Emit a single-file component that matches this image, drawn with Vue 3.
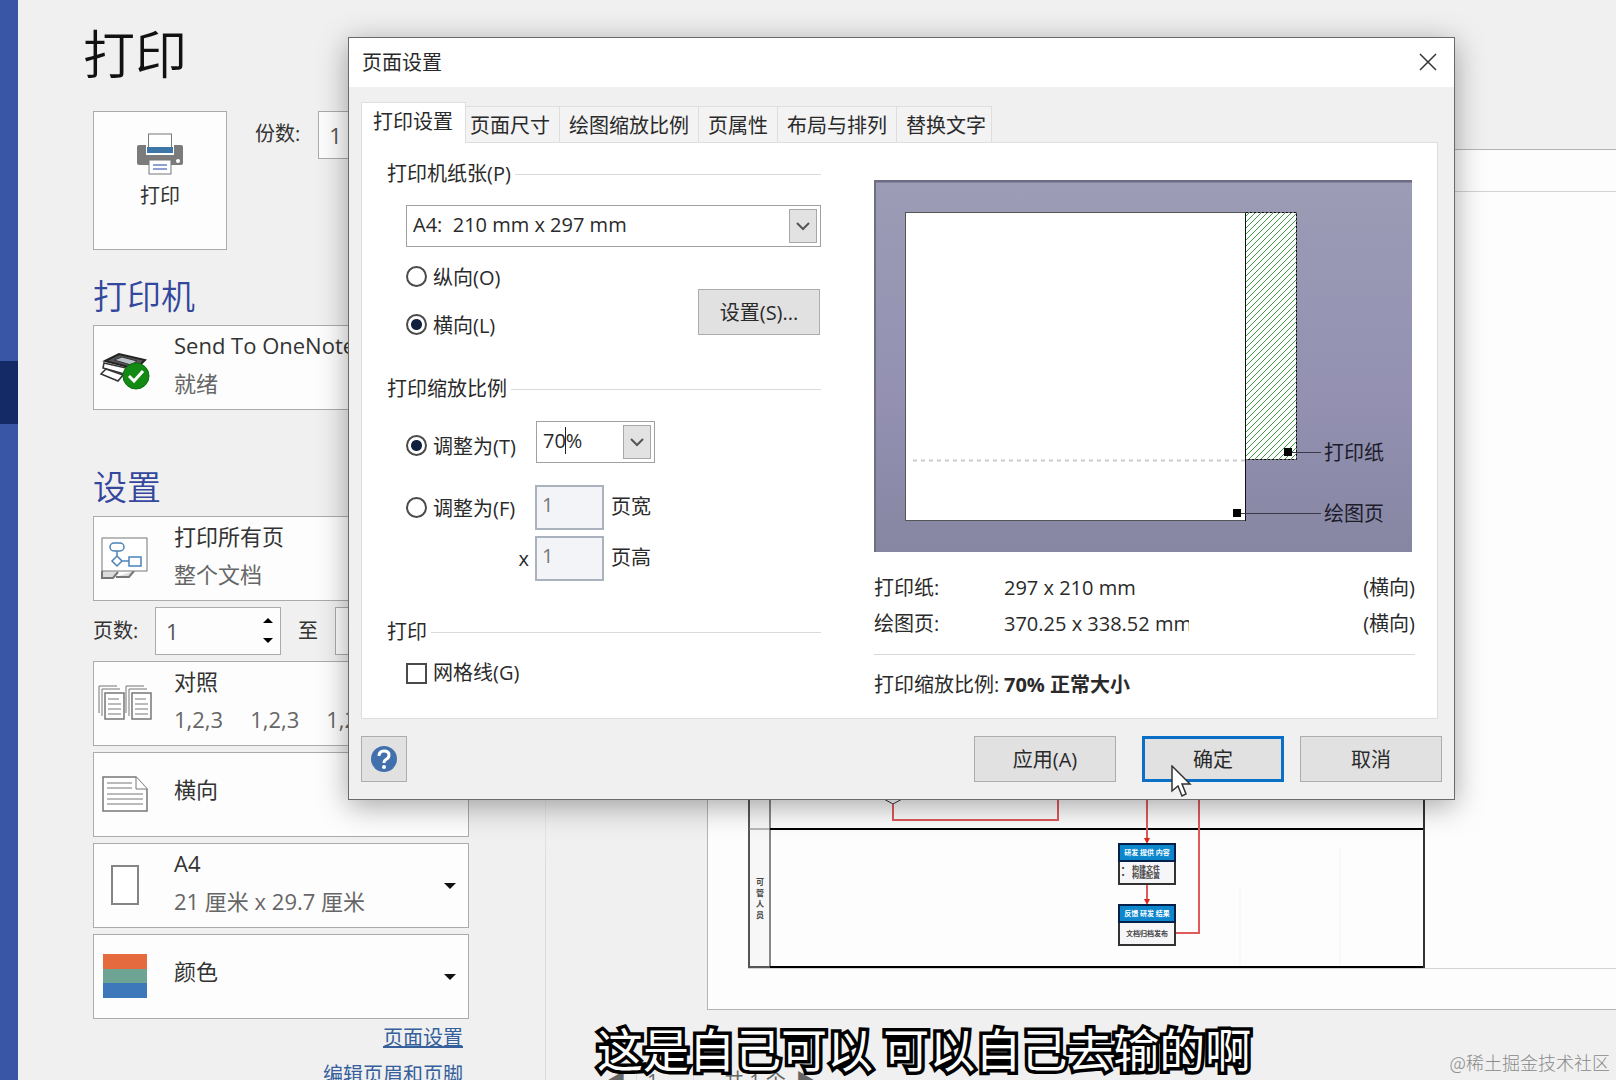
<script setup>
import { ref } from 'vue'

const tabs = ['打印设置', '页面尺寸', '绘图缩放比例', '页属性', '布局与排列', '替换文字']
const activeTab = ref(0)
const orientation = ref('landscape')
const scaleMode = ref('adjust')
const zoom = ref('70%')
const grid = ref(false)
const copies = ref('1')
const fromPage = ref('1')
const toPage = ref('1')
const currentPage = ref('1')
const laneName = ['可', '管', '人', '员']
</script>

<template>
  <div class="app">
    <nav class="rail"><div class="rail-active"></div></nav>

    <main class="panel">
      <h1>打印</h1>
      <div class="print-row">
        <button class="print-btn">
          <svg width="46" height="42" viewBox="0 0 46 42">
            <path d="M2 12h42q2 0 2 2v16q0 2-2 2H2q-2 0-2-2V14q0-2 2-2z" fill="#7b7b7b" />
            <rect x="9" y="10" width="28" height="12" fill="#fdfdfd" />
            <rect x="11.500" y="1" width="23" height="18" fill="#fff" stroke="#777" />
            <rect x="10" y="14" width="26" height="6" fill="#3f76a8" />
            <rect x="12" y="27" width="22" height="14" fill="#fff" stroke="#777" />
            <path d="M16 32h14M16 36h14" stroke="#8f9fd6" stroke-width="2" />
            <circle cx="41" cy="28" r="2" fill="#fff" />
          </svg>
          <span>打印</span>
        </button>
        <label class="copies"><span>份数:</span><input v-model="copies" class="num" type="text" /></label>
      </div>

      <h2>打印机</h2>
      <button class="card">
        <span class="icon">
          <svg width="52" height="48" viewBox="0 -8 52 48">
            <path d="M6 10 20 3l26 6-9 9z" fill="#555" stroke="#222" stroke-width="2" />
            <path d="M15 9 23 6l15 4-6 4z" fill="#b9c1c8" stroke="#333" />
            <path d="M5 12 36 19v7L4 17z" fill="#fff" stroke="#333" stroke-width="1.500" />
            <path d="M7 18 2 23l17 7 5-6z" fill="#fff" stroke="#333" stroke-width="1.500" />
            <circle cx="37" cy="25" r="13" fill="#138a13" stroke="#0a6d0a" />
            <path d="m30 25 5 5 9-10" fill="none" stroke="#fff" stroke-width="3" />
          </svg>
        </span>
        <span class="lines"><span>Send To OneNote</span><span class="sub">就绪</span></span>
        <i class="caret"></i>
      </button>

      <h2 class="second">设置</h2>
      <div class="stack">
        <button class="card">
          <span class="icon">
            <svg width="48" height="42" viewBox="0 0 48 42" fill="none">
              <path d="M1 34v7h11l5-6M15 40h13l5-6" stroke="#777" stroke-width="2" fill="#ddd" />
              <rect x="1" y="1" width="45" height="33" fill="#fff" stroke="#777" stroke-width="1" />
              <g stroke="#4a83ba" stroke-width="1.500">
                <rect x="9" y="6" width="14" height="8" rx="4" />
                <path d="M16 14v5M16 19l5 5-5 5-5-5zM21 24h7" />
                <rect x="28" y="20" width="12" height="9" />
              </g>
            </svg>
          </span>
          <span class="lines"><span>打印所有页</span><span class="sub">整个文档</span></span>
          <i class="caret"></i>
        </button>

        <div class="pages">
          <label for="from">页数:</label>
          <div class="spin">
            <input id="from" v-model="fromPage" class="num" type="text" />
            <span class="arrows"><i class="up"></i><i class="down"></i></span>
          </div>
          <label for="to">至</label>
          <div class="spin"><input id="to" v-model="toPage" class="num" type="text" /></div>
        </div>

        <button class="card">
          <span class="icon">
            <svg width="54" height="36" viewBox="0 0 54 36" fill="#fff" stroke="#777">
              <g v-for="x in [0, 27]" :key="x" :transform="`translate(${x} 0)`">
                <path d="M1 28V1h18" fill="none" />
                <path d="M4 31V4h18" fill="none" />
                <path d="M7 8h19v26H7z" stroke-width="1.500" />
                <path d="M10 14h11M10 19h13M10 24h13M10 29h13" />
              </g>
            </svg>
          </span>
          <span class="lines">
            <span>对照</span>
            <span class="sub sets"><span>1,2,3</span><span>1,2,3</span><span>1,2,3</span></span>
          </span>
          <i class="caret"></i>
        </button>

        <button class="card">
          <span class="icon">
            <svg width="46" height="36" viewBox="0 0 46 36" fill="#fff" stroke="#777">
              <path d="M1 1h33l11 12v22H1z" stroke-width="1.500" />
              <path d="M34 1v12h11" />
              <path d="M5 7h25M5 12h25M5 18h36M5 23h36M5 28h36" />
            </svg>
          </span>
          <span class="lines single"><span>横向</span></span>
          <i class="caret"></i>
        </button>

        <button class="card">
          <span class="icon"><i class="sheet"></i></span>
          <span class="lines"><span>A4</span><span class="sub">21 厘米 x 29.7 厘米</span></span>
          <i class="caret"></i>
        </button>

        <button class="card">
          <span class="icon"><i class="swatch"></i></span>
          <span class="lines single"><span>颜色</span></span>
          <i class="caret"></i>
        </button>
      </div>

      <div class="links">
        <a href="#page-setup">页面设置</a>
        <a href="#header-footer">编辑页眉和页脚</a>
      </div>
    </main>

    <section class="preview">
      <div class="page">
        <div class="drawing">
          <svg width="680" height="170" viewBox="0 0 680 170">
            <rect x="1" y="0" width="21" height="168" fill="#f7f7f7" />
            <path d="M1 0V169H22" fill="none" stroke="#555" stroke-width="2" />
            <path d="M22 0V168" stroke="#888" stroke-width="2" />
            <path d="M1 31H22" stroke="#777" />
            <path d="M22 31H676M22 169H676" stroke="#000" stroke-width="2" />
            <path d="M676 0V170" stroke="#333" stroke-width="2" />
            <path d="M492 90V168M592 50V168" stroke="#f3f3f3" />
            <path d="M134 0 145 6 156 0" fill="#fff" stroke="#333" />
            <g fill="none" stroke="#e0595c" stroke-width="2">
              <path d="M145 6V22H310V0M399 0V43M399 87V104M428 135H451V0" />
            </g>
            <path d="M396 40h6l-3 6zM396 101h6l-3 6z" fill="#e0261c" />
            <g stroke="#333" stroke-width="2">
              <rect x="371" y="46" width="56" height="40" fill="#f6f6f8" />
              <rect x="371" y="46" width="56" height="17" fill="#0c86cc" stroke="#04204a" />
              <rect x="371" y="107" width="56" height="40" fill="#f6f6f8" />
              <rect x="371" y="107" width="56" height="17" fill="#0c86cc" stroke="#04204a" />
            </g>
            <g class="tiny" text-anchor="middle">
              <text class="head" x="399" y="57">研发 提供 内容</text>
              <text x="398" y="73">构建文件</text>
              <text x="398" y="80">构建配置</text>
              <text x="375" y="73">•</text>
              <text x="375" y="80">•</text>
              <text class="head" x="399" y="118">反馈 研发 结果</text>
              <text x="399" y="138">文档归档发布</text>
              <text v-for="(c, i) in laneName" :key="c" class="lane" x="12" :y="87 + i * 11">{{ c }}</text>
            </g>
          </svg>
        </div>
      </div>
      <div class="pager">
        <span>◀</span>
        <input v-model="currentPage" type="text" aria-label="当前页" />
        <span>共 1 个</span>
        <span>▶</span>
      </div>
    </section>

    <div class="dialog" role="dialog" aria-label="页面设置">
      <header>
        <span>页面设置</span>
        <button class="close" aria-label="关闭">
          <svg width="18" height="18" viewBox="0 0 18 18"><path d="M1 1 17 17M17 1 1 17" stroke="#333" stroke-width="1.500" /></svg>
        </button>
      </header>

      <div class="tabs" role="tablist">
        <button v-for="(t, i) in tabs" :key="t" role="tab" :class="['tab', { active: i === activeTab }]" @click="activeTab = i">{{ t }}</button>
      </div>

      <div class="pane">
        <div class="form">
          <fieldset>
            <legend>打印机纸张(P)</legend>
            <div class="combo paper">
              <select aria-label="打印机纸张"><option>A4:&nbsp; 210 mm x 297 mm</option></select>
              <span class="drop"><svg width="14" height="9" viewBox="0 0 14 9"><path d="m1 1 6 6 6-6" /></svg></span>
            </div>
            <div class="orient">
              <div class="radios">
                <label><input v-model="orientation" type="radio" value="portrait" />纵向(O)</label>
                <label><input v-model="orientation" type="radio" value="landscape" />横向(L)</label>
              </div>
              <button class="btn setup">设置(S)...</button>
            </div>
          </fieldset>

          <fieldset class="scale">
            <legend>打印缩放比例</legend>
            <div class="row adjust">
              <label><input v-model="scaleMode" type="radio" value="adjust" />调整为(T)</label>
              <div class="combo zoom">
                <input v-model="zoom" type="text" aria-label="缩放比例" />
                <i class="cursor"></i>
                <button class="drop" aria-label="展开"><svg width="14" height="9" viewBox="0 0 14 9"><path d="m1 1 6 6 6-6" /></svg></button>
              </div>
            </div>
            <div class="row fit">
              <label><input v-model="scaleMode" type="radio" value="fit" />调整为(F)</label>
              <input id="wide" class="count" type="text" value="1" disabled /><label for="wide" class="unit">页宽</label>
            </div>
            <div class="row tall">
              <span class="times">x</span>
              <input id="tall" class="count" type="text" value="1" disabled /><label for="tall" class="unit">页高</label>
            </div>
          </fieldset>

          <fieldset class="print">
            <legend>打印</legend>
            <label class="check"><input v-model="grid" type="checkbox" />网格线(G)</label>
          </fieldset>
        </div>

        <div class="info">
          <svg class="sample" width="538" height="372" viewBox="0 0 538 372">
            <defs>
              <linearGradient id="bg" x1="0" y1="0" x2="0" y2="1">
                <stop offset="0" stop-color="#9c9cb6" />
                <stop offset="0.600" stop-color="#9390b1" />
                <stop offset="1" stop-color="#8686a2" />
              </linearGradient>
              <pattern id="hatch" width="6" height="6" patternUnits="userSpaceOnUse">
                <path d="M-1 7 7-1M-1 1 1-1M5 7 7 5" stroke="#3f9a48" stroke-width="1" />
              </pattern>
            </defs>
            <rect width="538" height="372" fill="url(#bg)" />
            <path d="M0 1H538" stroke="#6c6c84" stroke-width="3" />
            <path d="M1 0V372" stroke="#6f6f80" stroke-width="2" />
            <rect x="31.500" y="32.500" width="340" height="308" fill="#fff" stroke="#555" />
            <rect x="371.500" y="32.500" width="51" height="247" fill="#fff" />
            <rect x="371.500" y="32.500" width="51" height="247" fill="url(#hatch)" stroke="#111" stroke-dasharray="3 1" />
            <path d="M371.500 33V341" stroke="#111" />
            <path d="M39 280.500H371" stroke="#ccc" stroke-width="2" stroke-dasharray="4 4" />
            <path d="M410 268h8v8h-8zM359 329h8v8h-8z" fill="#000" />
            <path d="M418 272.500H447M367 333.500H447" stroke="#3a3a4c" stroke-width="1" />
            <g font-size="20" fill="#1c1c2a">
              <text x="450" y="280">打印纸</text>
              <text x="450" y="341">绘图页</text>
            </g>
          </svg>
          <dl>
            <div><dt>打印纸:</dt><dd>297 x 210 mm</dd><dd class="dir">(横向)</dd></div>
            <div><dt>绘图页:</dt><dd>370.25 x 338.52 mm</dd><dd class="dir">(横向)</dd></div>
            <div class="total"><dt>打印缩放比例:</dt><dd><b>70% 正常大小</b></dd></div>
          </dl>
        </div>
      </div>

      <footer>
        <button class="help" aria-label="帮助">
          <svg width="28" height="28" viewBox="0 0 28 28">
            <circle cx="14" cy="14" r="13" fill="#4170ad" />
            <path d="M9 11q0-5 5-5t5 4q0 3-3 4.500-2 1-2 3.500" fill="none" stroke="#fff" stroke-width="3" />
            <circle cx="14" cy="22" r="2" fill="#fff" />
          </svg>
        </button>
        <button class="btn apply">应用(A)</button>
        <button class="btn ok">确定</button>
        <button class="btn">取消</button>
      </footer>

      <svg class="pointer" width="22" height="34" viewBox="0 0 22 34">
        <path d="M2 1V26L8 21 12 31 16 29 12 19H20z" fill="#fff" stroke="#333" stroke-width="1.500" />
      </svg>
    </div>

    <p class="caption">这是自己可以 可以自己去输的啊</p>
    <p class="watermark">@稀土掘金技术社区</p>
  </div>
</template>

<style>
body {
  margin: 0;
  background: #f0f0f0;
}
</style>

<style scoped>
* {
  box-sizing: border-box;
}
.app {
  position: relative;
  display: flex;
  height: 100vh;
  overflow: hidden;
  background: #f0f0f0;
  color: #333;
  font-family: "Open Sans", "Noto Sans CJK SC", sans-serif;
  font-size: 20px;
}
button,
input,
select {
  margin: 0;
  padding: 0;
  font: inherit;
  color: inherit;
  border-radius: 0;
}
h1,
h2,
p,
dl,
dd {
  margin: 0;
}

.rail {
  flex: none;
  width: 18px;
  padding-top: 361px;
  background: #3955a6;
}
.rail-active {
  height: 63px;
  background: #142a66;
}

.panel {
  flex: none;
  width: 528px;
  padding: 24px 0 0 75px;
  border-right: 1px solid;
  border-image: linear-gradient(transparent 70%, #dcdcdc 80%) 1;
}
h1 {
  margin-left: -10px;
  font-size: 52px;
  line-height: 60px;
  font-weight: 350;
  color: #111;
}
h2 {
  margin: 26px 0 9px;
  font-size: 34px;
  line-height: 40px;
  font-weight: 350;
  color: #33479c;
}
h2.second {
  margin-top: 57px;
}
.print-row {
  display: flex;
  margin-top: 27px;
}
.print-btn {
  display: flex;
  flex-direction: column;
  align-items: center;
  gap: 7px;
  width: 134px;
  height: 139px;
  padding-top: 21px;
  background: #fdfdfd;
  border: 1px solid #ababab;
  line-height: 28px;
}
.copies {
  display: flex;
  gap: 18px;
  padding-left: 28px;
  line-height: 46px;
}
.num {
  width: 126px;
  height: 48px;
  padding-left: 10px;
  border: 1px solid #ababab;
  background: #fdfdfd;
  font-size: 22px;
  color: #555;
}
.stack {
  display: flex;
  flex-direction: column;
  gap: 6px;
}
.card {
  display: flex;
  width: 376px;
  height: 85px;
  background: #fdfdfd;
  border: 1px solid #ababab;
  text-align: left;
  font-size: 22px;
}
.icon {
  display: flex;
  align-items: center;
  justify-content: center;
  width: 62px;
  height: 81px;
}
.lines {
  display: flex;
  flex: 1;
  flex-direction: column;
  padding-left: 18px;
  line-height: 38px;
}
.lines.single {
  padding-top: 17px;
}
.sub {
  color: #666;
}
.sets {
  display: flex;
  gap: 27px;
}
.caret {
  align-self: center;
  margin-right: 12px;
  border: 6px solid transparent;
  border-top-color: #111;
  border-bottom-width: 0;
}
.sheet {
  width: 28px;
  height: 40px;
  border: 2px solid #858585;
  background: #fff;
}
.swatch {
  width: 44px;
  height: 44px;
  background: linear-gradient(#e56a3e 0 34%, #6ea493 34% 66%, #3c78ba 66%);
}
.pages {
  display: flex;
  align-items: center;
  gap: 17px;
}
.pages label {
  padding-bottom: 4px;
}
.pages label:first-child {
  width: 45px;
  white-space: nowrap;
}
.spin {
  position: relative;
}
.arrows {
  position: absolute;
  top: 11px;
  right: 8px;
  display: flex;
  flex-direction: column;
  gap: 15px;
}
.arrows i {
  border: 0 solid transparent;
  border-width: 0 5px;
}
.arrows .up {
  border-bottom: 5px solid #000;
}
.arrows .down {
  border-top: 5px solid #000;
}
.links {
  display: flex;
  flex-direction: column;
  align-items: flex-end;
  width: 370px;
  line-height: 37px;
}
.links a {
  color: #35609c;
}

.preview {
  flex: 1;
  min-width: 0;
  padding: 149px 0 0 161px;
}
.page {
  height: 861px;
  padding: 41px 0 40px 40px;
  background: #fdfdfd;
  border: 1px solid #b4b4b4;
  border-right: 0;
}
.drawing {
  display: flex;
  align-items: flex-end;
  height: 778px;
  border: 1px solid #d2d2d2;
  border-width: 1px 0;
}
.drawing svg {
  flex: none;
}
.tiny {
  font-size: 7px;
  font-weight: 700;
  fill: #444;
}
.tiny .head {
  fill: #fff;
}
.tiny .lane {
  font-size: 8px;
}
.pager {
  display: flex;
  margin-left: -101px;
  padding-top: 53px;
  line-height: 36px;
  color: #666;
}
.pager input {
  width: 58px;
  height: 36px;
  margin: 0 30px 0 10px;
  padding-left: 10px;
  background: none;
  border: 1px solid #dcdcdc;
}
.pager span:last-child {
  margin-left: 10px;
}

.dialog {
  position: absolute;
  top: 37px;
  left: 348px;
  right: 161px;
  background: #f0f0f0;
  border: 1px solid #6a6a6a;
  box-shadow: 0 6px 28px rgba(0, 0, 0, 0.35);
  color: #2a2a2a;
}
.dialog header {
  display: flex;
  align-items: center;
  justify-content: space-between;
  height: 49px;
  padding: 0 17px 2px 13px;
  background: #fff;
}
.close {
  display: flex;
  background: none;
  border: 0;
}
.tabs {
  display: flex;
  align-items: flex-end;
  padding: 15px 12px 0;
}
.tab {
  height: 36px;
  padding: 0 9px 1px;
  background: #f3f3f3;
  border: 1px solid #dedede;
  border-left-width: 0;
  border-bottom: 0;
  white-space: nowrap;
}
.tab:last-child {
  padding-right: 5px;
}
.tab.active {
  position: relative;
  z-index: 1;
  height: 41px;
  margin: 0 -5px -1px 0;
  padding: 0 12px 5px 11px;
  background: #fff;
  border-left-width: 1px;
}
.pane {
  display: flex;
  gap: 53px;
  margin: 0 16px 0 12px;
  padding: 17px 22px 15px 25px;
  background: #fff;
  border: 1px solid #dedede;
}
.form {
  flex: none;
  width: 434px;
}
fieldset {
  margin: 0;
  padding: 0;
  border: 0;
}
legend {
  display: flex;
  align-items: center;
  gap: 4px;
  width: 100%;
  padding: 0;
  line-height: 28px;
  white-space: nowrap;
}
legend::after {
  content: "";
  flex: 1;
  height: 1px;
  background: #dadada;
}
.combo {
  position: relative;
  display: flex;
  height: 42px;
  padding: 3px;
  background: #fff;
  border: 1px solid #a0a0a0;
}
.combo select,
.combo input {
  flex: 1;
  min-width: 0;
  padding: 0 0 3px 3px;
  appearance: none;
  background: none;
  border: 0;
}
.paper {
  margin: 17px 0 5px 19px;
}
.drop {
  display: flex;
  align-items: center;
  justify-content: center;
  width: 28px;
  background: #e2e2e2;
  border: 1px solid #a8a8a8;
  pointer-events: none;
}
.drop path {
  fill: none;
  stroke: #555;
  stroke-width: 2;
}
.orient {
  display: flex;
  justify-content: space-between;
  padding-left: 19px;
}
.radios label,
.row label,
.check {
  display: flex;
  align-items: center;
  gap: 6px;
}
.radios label {
  height: 48px;
}
input[type="radio"],
input[type="checkbox"] {
  width: 21px;
  height: 21px;
  appearance: none;
  background: #fff;
  border: 2px solid #4a4a4a;
}
input[type="radio"] {
  border-radius: 50%;
}
input[type="radio"]:checked {
  background: radial-gradient(circle, #10213f 0 5px, #fff 6px);
}
.btn {
  width: 142px;
  height: 46px;
  padding-bottom: 2px;
  background: #e1e1e1;
  border: 1px solid #adadad;
}
.btn.setup {
  width: 122px;
  margin: 37px 1px 0 0;
}
.scale {
  margin-top: 27px;
}
.row {
  display: flex;
  align-items: center;
  padding-left: 19px;
}
.adjust {
  align-items: flex-start;
  height: 48px;
  margin-top: 18px;
}
.adjust label {
  width: 130px;
  height: 48px;
}
.zoom {
  width: 119px;
}
.cursor {
  position: absolute;
  top: 5px;
  left: 28px;
  width: 1px;
  height: 27px;
  background: #222;
}
.fit {
  margin-top: 16px;
}
.fit label:first-child {
  width: 129px;
}
.tall {
  margin-top: 6px;
}
.times {
  width: 129px;
  padding-right: 6px;
  text-align: right;
}
.count {
  width: 69px;
  height: 45px;
  padding: 0 0 6px 5px;
  background: #f2f4f7;
  border: 2px solid #a9b2bd;
  color: #777;
}
.unit {
  margin-left: 7px;
  padding-bottom: 4px;
}
.print {
  margin-top: 37px;
}
.check {
  margin-top: 13px;
  padding-left: 19px;
  line-height: 28px;
}
.info {
  flex: 1;
  padding-top: 20px;
}
.sample {
  display: block;
  margin-bottom: 18px;
}
dl > div {
  display: flex;
  line-height: 36px;
}
dt {
  width: 130px;
  white-space: nowrap;
}
dd {
  width: 185px;
  overflow: hidden;
  white-space: nowrap;
}
.dir {
  flex: 1;
  text-align: right;
}
.total {
  margin-top: 12px;
  padding-top: 12px;
  border-top: 1px solid #dadada;
}
.dialog footer {
  display: flex;
  align-items: center;
  gap: 16px;
  padding: 17px 12px 17px 12px;
}
.help {
  display: flex;
  align-items: center;
  justify-content: center;
  width: 46px;
  height: 46px;
  margin-right: auto;
  background: #e1e1e1;
  border: 1px solid #adadad;
}
.apply {
  margin-right: 10px;
}
.btn.ok {
  border: 3px solid #0a6fc7;
}
.pointer {
  position: absolute;
  right: 262px;
  bottom: 0;
}

.caption {
  position: absolute;
  left: 597px;
  bottom: 3px;
  font-family: "Noto Sans CJK SC", sans-serif;
  font-size: 46px;
  line-height: 60px;
  font-weight: 400;
  color: #fff;
  white-space: nowrap;
  -webkit-text-stroke: 7px #000;
  paint-order: stroke fill;
}
.watermark {
  position: absolute;
  right: 6px;
  bottom: 4px;
  font-family: "Noto Sans CJK SC", sans-serif;
  font-size: 18px;
  line-height: 28px;
  font-weight: 300;
  color: #8a8a8a;
}
</style>
